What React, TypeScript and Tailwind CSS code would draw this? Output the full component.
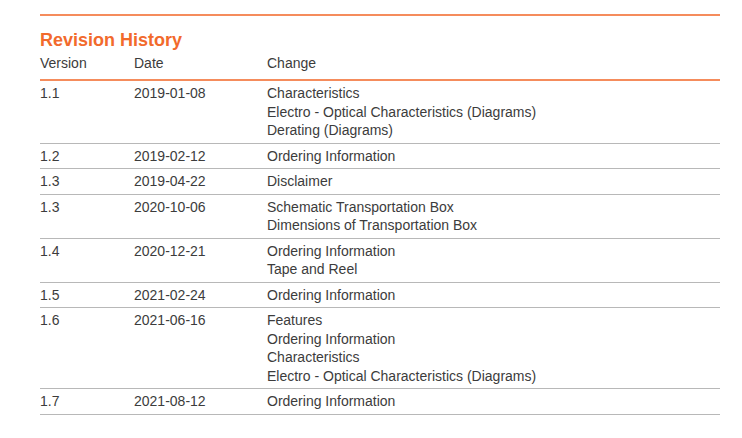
import React from 'react';

const rows: { version: string; date: string; changes: string[] }[] = [
  { version: '1.1', date: '2019-01-08', changes: ['Characteristics', 'Electro - Optical Characteristics (Diagrams)', 'Derating (Diagrams)'] },
  { version: '1.2', date: '2019-02-12', changes: ['Ordering Information'] },
  { version: '1.3', date: '2019-04-22', changes: ['Disclaimer'] },
  { version: '1.3', date: '2020-10-06', changes: ['Schematic Transportation Box', 'Dimensions of Transportation Box'] },
  { version: '1.4', date: '2020-12-21', changes: ['Ordering Information', 'Tape and Reel'] },
  { version: '1.5', date: '2021-02-24', changes: ['Ordering Information'] },
  { version: '1.6', date: '2021-06-16', changes: ['Features', 'Ordering Information', 'Characteristics', 'Electro - Optical Characteristics (Diagrams)'] },
  { version: '1.7', date: '2021-08-12', changes: ['Ordering Information'] },
];

export default function App() {
  return (
    <div className="w-[742px] h-[438px] bg-white overflow-hidden" style={{ fontFamily: '"Liberation Sans", Arial, sans-serif' }}>
      <div className="ml-[40px] w-[680px] pt-[14px]">
        <div className="h-[2px] bg-[#f58c5c]" />
        <h2 className="mt-[13px] text-[18px] leading-[22px] font-bold text-[#f26a2c]">Revision History</h2>
        {/* header */}
        <div className="mt-[3px] flex text-[14px] leading-[19px] text-[#3c3c3c] pb-[6px] border-b-2 border-[#f58c5c]">
          <div className="w-[94px]">Version</div>
          <div className="w-[133px]">Date</div>
          <div className="flex-1">Change</div>
        </div>
        {rows.map((r, i) => (
          <div key={i} className="flex text-[14px] leading-[18.5px] text-[#3c3c3c] pt-[3px] pb-[3px] border-b border-[#b8b8b8]">
            <div className="w-[94px]">{r.version}</div>
            <div className="w-[133px]">{r.date}</div>
            <div className="flex-1">
              {r.changes.map((c, j) => (
                <div key={j}>{c}</div>
              ))}
            </div>
          </div>
        ))}
      </div>
    </div>
  );
}
